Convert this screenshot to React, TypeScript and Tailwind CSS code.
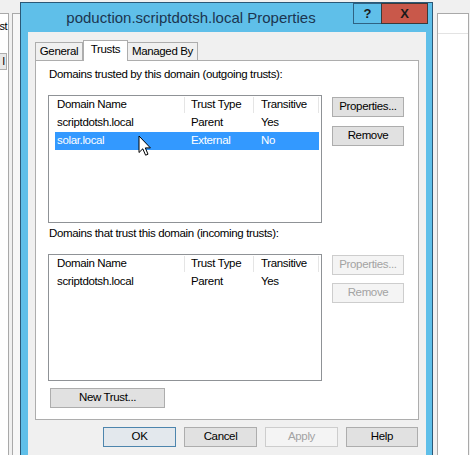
import React from "react";

const font = { fontFamily: '"Liberation Sans", Arial, sans-serif' };

type Row = { name: string; type: string; transitive: string; selected?: boolean };

const outgoing: Row[] = [
  { name: "scriptdotsh.local", type: "Parent", transitive: "Yes" },
  { name: "solar.local", type: "External", transitive: "No", selected: true },
];

const incoming: Row[] = [{ name: "scriptdotsh.local", type: "Parent", transitive: "Yes" }];

function Btn({
  label,
  disabled,
  primary,
  className = "",
}: {
  label: string;
  disabled?: boolean;
  primary?: boolean;
  className?: string;
}) {
  const look = disabled
    ? "bg-[#f4f4f4] border-[#cdcdcd] text-[#a3a3a3]"
    : primary
    ? "bg-[#e3e8ed] border-[#4d85ad] text-black"
    : "bg-[#e1e1e1] border-[#adadad] text-black";
  return (
    <div
      className={`flex h-[20px] items-center justify-center border text-[11.5px] tracking-[-0.35px] ${look} ${className}`}
    >
      {label}
    </div>
  );
}

function ListView({ rows, height }: { rows: Row[]; height: string }) {
  return (
    <div className={`w-[274px] ${height} border border-[#8f9296] bg-white pl-[3px] pr-[2px] pt-[1px]`}>
      <div className="flex h-[16px] text-[11.5px] tracking-[-0.35px] text-black">
        <div className="flex w-[133px] items-center border-r border-[#e5e5e5] pl-[5px]">Domain Name</div>
        <div className="flex w-[69px] items-center border-r border-[#e5e5e5] pl-[6px]">Trust Type</div>
        <div className="flex w-[65px] items-center border-r border-[#e5e5e5] pl-[7px]">Transitive</div>
      </div>
      <div className="mt-[1px] flex flex-col">
        {rows.map((r) => (
          <div
            key={r.name}
            className={`ml-[3px] flex h-[18px] items-center text-[11.5px] tracking-[-0.35px] ${
              r.selected ? "bg-[#3399ff] text-white" : "text-black"
            }`}
          >
            <div className="w-[130px] pl-[2px]">{r.name}</div>
            <div className="w-[69px] pl-[6px]">{r.type}</div>
            <div className="w-[65px] pl-[7px]">{r.transitive}</div>
          </div>
        ))}
      </div>
    </div>
  );
}

function Cursor() {
  return (
    <svg className="absolute left-[138px] top-[135px]" width="14" height="22" viewBox="0 0 14 22">
      <path
        d="M1 1 L1 17.5 L4.8 13.8 L7.6 20.2 L10 19.2 L7.3 12.9 L12.4 12.9 Z"
        fill="white"
        stroke="black"
        strokeWidth="1"
      />
    </svg>
  );
}

export default function App() {
  return (
    <div className="relative flex h-[455px] w-[470px] overflow-hidden bg-[#f0f0f0]" style={font}>
      {/* windows behind, left */}
      <div className="flex w-[20px] shrink-0 pt-[13px]">
        <div className="relative h-full w-[9px] border-r border-t border-[#a9a9a9] bg-white">
          <div className="absolute right-[1px] top-[6px] text-[11px] leading-[13px] tracking-[-0.5px] text-black">st</div>
          <div className="absolute left-0 top-[39px] flex h-[17px] w-[7px] items-center justify-end border border-l-0 border-[#adadad] bg-[#e8e8e8] pr-[1px] text-[11px]">
            l
          </div>
        </div>
        <div className="ml-[3px] h-full flex-1 border-l border-t border-[#a9a9a9] bg-[#f7f7f7]" />
      </div>

      {/* dialog */}
      <div className="mt-[2px] flex h-[460px] w-[413px] shrink-0 flex-col border border-[#2a5877] bg-[#5fbfe9]">
        {/* title bar */}
        <div className="flex h-[29px] shrink-0">
          <div className="flex flex-1 items-center justify-center pl-[8px] pt-[1px] text-[15px] text-[#1c3550]">
            poduction.scriptdotsh.local Properties
          </div>
          <div className="mr-[4px] flex h-[21px]">
            <div className="flex w-[29px] items-center justify-center border border-[#2f6283] text-[13px] font-bold text-[#1a1a1a]">
              ?
            </div>
            <div className="-ml-px flex w-[47px] items-center justify-center border border-[#3a3a3a] bg-[#c9584a] text-[13px] font-bold text-[#1a1a1a]">
              X
            </div>
          </div>
        </div>

        {/* client area */}
        <div className="ml-[7px] mr-[6px] flex flex-1 flex-col bg-[#f0f0f0] pl-[7px] pr-[7px] pt-[8px]">
          {/* tabs */}
          <div className="flex h-[20px] items-end text-[11.5px] tracking-[-0.35px]">
            <div className="flex h-[18px] w-[48px] items-center justify-center border border-b-0 border-[#adadad] bg-[#f0f0f0]">
              General
            </div>
            <div className="relative z-10 -mb-px flex h-[21px] w-[45px] items-center justify-center border border-b-0 border-[#adadad] bg-white pb-[2px]">
              Trusts
            </div>
            <div className="flex h-[18px] w-[70px] items-center justify-center border border-b-0 border-l-0 border-[#adadad] bg-[#f0f0f0]">
              Managed By
            </div>
          </div>

          {/* tab panel */}
          <div className="flex h-[360px] w-[384px] flex-col border border-[#adadad] bg-white pl-[12px]">
            <div className="mt-[6px] h-[15px] pl-[1px] text-[11.5px] leading-[15px] tracking-[-0.35px] text-black">
              Domains trusted by this domain (outgoing trusts):
            </div>
            <div className="mt-[13px] flex">
              <ListView rows={outgoing} height="h-[128px]" />
              <div className="ml-[10px] mt-[2px] flex flex-col gap-[9px]">
                <Btn label="Properties..." className="w-[72px]" />
                <Btn label="Remove" className="w-[72px]" />
              </div>
            </div>

            <div className="mt-[3px] h-[15px] pl-[1px] text-[11.5px] leading-[15px] tracking-[-0.35px] text-black">
              Domains that trust this domain (incoming trusts):
            </div>
            <div className="mt-[13px] flex">
              <ListView rows={incoming} height="h-[127px]" />
              <div className="ml-[10px] mt-[1px] flex flex-col gap-[8px]">
                <Btn label="Properties..." disabled className="w-[72px]" />
                <Btn label="Remove" disabled className="w-[72px]" />
              </div>
            </div>

            <div className="mt-[7px] pl-[2px]">
              <Btn label="New Trust..." className="w-[115px]" />
            </div>
          </div>

          {/* dialog buttons */}
          <div className="mt-[7px] flex justify-end gap-[8px] pr-[1px]">
            <Btn label="OK" primary className="w-[73px]" />
            <Btn label="Cancel" className="w-[73px]" />
            <Btn label="Apply" disabled className="w-[73px]" />
            <Btn label="Help" className="w-[72px]" />
          </div>
        </div>
      </div>

      {/* windows behind, right */}
      <div className="flex flex-1 pl-[4px] pr-[1px] pt-[13px]">
        <div className="flex h-full flex-1 flex-col border border-b-0 border-[#a9a9a9] bg-white">
          <div className="h-[20px] border-b border-[#e3e3e3]" />
        </div>
      </div>

      <Cursor />
    </div>
  );
}
